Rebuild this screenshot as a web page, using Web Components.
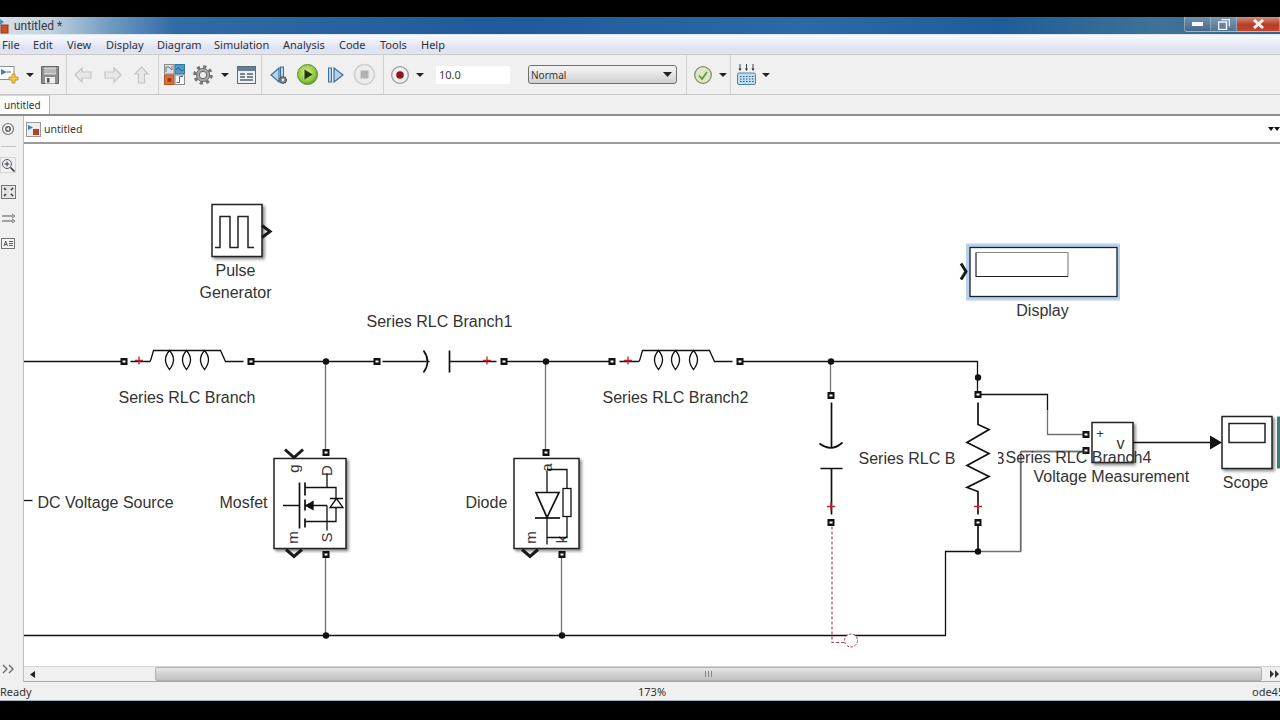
<!DOCTYPE html>
<html>
<head>
<meta charset="utf-8">
<title>untitled</title>
<style>
  html, body { margin: 0; height: 720px; overflow: hidden; background: #000; }
</style>
</head>
<body>
<sl-window>
  <sl-titlebar title-text="untitled *"></sl-titlebar>
  <sl-menubar>
    <sl-menu style="width:16px">File</sl-menu>
    <sl-menu style="width:19px">Edit</sl-menu>
    <sl-menu style="width:24px">View</sl-menu>
    <sl-menu style="width:36px">Display</sl-menu>
    <sl-menu style="width:42px">Diagram</sl-menu>
    <sl-menu style="width:54px">Simulation</sl-menu>
    <sl-menu style="width:41px">Analysis</sl-menu>
    <sl-menu style="width:26px">Code</sl-menu>
    <sl-menu style="width:26px">Tools</sl-menu>
    <sl-menu style="width:24px">Help</sl-menu>
  </sl-menubar>
  <sl-toolbar>
    <sl-toolgroup first style="width:67px;--gap:7px">
      <sl-icon name="new"></sl-icon><sl-icon name="caret"></sl-icon><sl-icon name="save"></sl-icon>
    </sl-toolgroup>
    <sl-toolgroup style="width:92px;--gap:12px;--pad:7px">
      <sl-icon name="back"></sl-icon><sl-icon name="forward"></sl-icon><sl-icon name="up"></sl-icon>
    </sl-toolgroup>
    <sl-toolgroup style="width:103px;--gap:8px;--pad:5px">
      <sl-icon name="library"></sl-icon><sl-icon name="gear"></sl-icon><sl-icon name="caret"></sl-icon><sl-icon name="table"></sl-icon>
    </sl-toolgroup>
    <sl-toolgroup style="width:122px;--gap:10px;--pad:8px">
      <sl-icon name="stepback"></sl-icon><sl-icon name="run" style="margin-left:-1px"></sl-icon><sl-icon name="stepforward"></sl-icon><sl-icon name="stop"></sl-icon>
    </sl-toolgroup>
    <sl-toolgroup style="width:303px;--gap:7px;--pad:7px">
      <sl-icon name="record"></sl-icon><sl-icon name="caret"></sl-icon>
      <sl-field style="margin-left:5px">10.0</sl-field>
      <sl-select style="margin-left:11px">Normal</sl-select>
    </sl-toolgroup>
    <sl-toolgroup style="width:44px;--gap:7px;--pad:7px">
      <sl-icon name="check"></sl-icon><sl-icon name="caret"></sl-icon>
    </sl-toolgroup>
    <sl-toolgroup last style="width:60px;--gap:6px;--pad:6px">
      <sl-icon name="grid"></sl-icon><sl-icon name="caret"></sl-icon>
    </sl-toolgroup>
  </sl-toolbar>
  <sl-tabs label="untitled"></sl-tabs>
  <sl-workspace>
    <sl-palette slot="palette"></sl-palette>
    <sl-breadcrumb slot="crumb" label="untitled"></sl-breadcrumb>
    <sl-diagram slot="canvas"></sl-diagram>
    <sl-hscroll slot="scroll"></sl-hscroll>
  </sl-workspace>
  <sl-status></sl-status>
</sl-window>

<script>
const ICONS = {
  caret: [8, 18, `<path d="M0 7h8l-4 4z" fill="#222"/>`],
  new: [19, 18, `<rect x="-3" y=".5" width="17" height="13" fill="#fff" stroke="#8a8f96"/>
    <path d="M1 3l6 3-6 3z" fill="#3f84b8"/><path d="M7 6h4" stroke="#555"/>
    <path d="M12 8h3v3h3v3h-3v3h-3v-3H9v-3h3z" fill="#f0c94e" stroke="#b88c24" stroke-width=".8"/>`],
  save: [18, 18, `<path d="M.5.5h17v17H.5z" fill="#8d8d8d" stroke="#666"/><rect x="3" y="1.500" width="12" height="7" fill="#d4d4d4"/>
    <path d="M3 4h12M3 6h12" stroke="#999"/><rect x="4" y="11" width="10" height="6.500" fill="#eee"/><rect x="6" y="12" width="2.500" height="4.500" fill="#555"/>`],
  back: [18, 18, `<path d="M1 9l7-7v4h9v6H8v4z" fill="#e8e8e8" stroke="#c6c6c6" stroke-width="1.200"/>`],
  forward: [18, 18, `<path d="M17 9l-7-7v4H1v6h9v4z" fill="#e8e8e8" stroke="#c6c6c6" stroke-width="1.200"/>`],
  up: [15, 18, `<path d="M7.500 1L14 8h-3.500v9h-6V8H1z" fill="#e8e8e8" stroke="#c6c6c6" stroke-width="1.200"/>`],
  library: [21, 21, `<rect x=".5" y=".5" width="9.500" height="9.500" fill="#d8dee4" stroke="#8c8c8c"/><path d="M2 8V3h3l3 3V2" fill="none" stroke="#777"/>
    <rect x="11" y=".5" width="9.500" height="9.500" fill="#4d9cc8" stroke="#2f78a0"/><path d="M12 6q2-4 3.500-1t4 1" fill="none" stroke="#1c5c80"/>
    <rect x=".5" y="11" width="9.500" height="9.500" fill="#d9733a" stroke="#b0562a"/><rect x="3.500" y="14" width="4" height="4" fill="#a8381c"/>
    <rect x="11" y="11" width="9.500" height="9.500" fill="#f6f6f6" stroke="#8c8c8c"/><path d="M12.500 18.500h3v-6h3.500" fill="none" stroke="#666"/>`],
  gear: [20, 20, `<circle cx="10" cy="10" r="8.300" fill="none" stroke="#777" stroke-width="3" stroke-dasharray="3.300 3.200"/>
    <circle cx="10" cy="10" r="6.600" fill="#a6a6a6" stroke="#6e6e6e"/><circle cx="10" cy="10" r="3.700" fill="#eee" stroke="#666"/>`],
  table: [19, 18, `<rect x=".5" y=".5" width="18" height="17" fill="#eef2f6" stroke="#5d6c7c"/><rect x="1" y="1" width="17" height="4" fill="#5f7f9c"/>
    <path d="M3 8h5M10 8h6M3 11h5M10 11h6M3 14h13" stroke="#55606a" stroke-width="1.300"/>`],
  stepback: [18, 20, `<path d="M9 3L1 10l8 7z" fill="#b6d3ea" stroke="#3c6f9c" stroke-width="1.200"/><rect x="10.500" y="2" width="3" height="13" fill="#b6d3ea" stroke="#3c6f9c"/>
    <circle cx="13" cy="15" r="3.300" fill="#8a8a8a" stroke="#444" stroke-width="1.300" stroke-dasharray="1.500 .6"/><circle cx="13" cy="15" r="1.200" fill="#eee"/>`],
  run: [21, 21, `<defs><radialGradient id="g" cx=".45" cy=".4" r=".65"><stop offset="0" stop-color="#d6ee8c"/><stop offset=".65" stop-color="#93c93f"/><stop offset="1" stop-color="#4f8d22"/></radialGradient></defs>
    <circle cx="10.500" cy="10.500" r="10" fill="url(#g)" stroke="#5a8f34"/><path d="M7.500 5.500l8 5-8 5z" fill="#22350f"/>`],
  stepforward: [16, 20, `<rect x=".5" y="3" width="3" height="14" fill="#b6d3ea" stroke="#3c6f9c"/><path d="M6 3l9 7-9 7z" fill="#b6d3ea" stroke="#3c6f9c" stroke-width="1.200"/>`],
  stop: [21, 21, `<circle cx="10.500" cy="10.500" r="10" fill="#ececec" stroke="#cfcfcf" stroke-width="1.500"/><rect x="6.500" y="6.500" width="8" height="8" fill="#b2b2b2"/>`],
  record: [18, 18, `<circle cx="9" cy="9" r="8.300" fill="#f2f0f0" stroke="#9a9a9a" stroke-width="1.300"/><circle cx="9" cy="9" r="3.800" fill="#8c1515"/>`],
  check: [18, 18, `<circle cx="9" cy="9" r="8.300" fill="#dce8c6" stroke="#7f8f6c" stroke-width="1.300"/><path d="M5 9.500l3 3.500 5-7" fill="none" stroke="#5f9a38" stroke-width="1.700"/>`],
  grid: [19, 21, `<path d="M3 0v6M9.500 0v6M16 0v6" stroke="#444"/><path d="M1.500 4.500L3 7l1.500-2.500M8 4.500L9.500 7 11 4.500M14.500 4.500L16 7l1.500-2.500" fill="#333"/>
    <rect x=".5" y="9" width="18" height="11.500" rx="1.500" fill="#bcdcf2" stroke="#5384a8"/>
    <path d="M3 12.500h14M3 15h14M3 17.500h14" stroke="#3a5f80" stroke-width="1.200" stroke-dasharray="1.500 1.500"/>`]
};

class SlIcon extends HTMLElement {
  constructor() {
    super();
    this.attachShadow({ mode: 'open' });
  }
  connectedCallback() {
    const [w, h, body] = ICONS[this.getAttribute('name')];
    this.shadowRoot.innerHTML = `
      <style>:host { display: block; flex: none; width: ${w}px; height: ${h}px; } svg { display: block; overflow: visible; }</style>
      <svg width="${w}" height="${h}" viewBox="0 0 ${w} ${h}">${body}</svg>`;
  }
}

class SlWindow extends HTMLElement {
  constructor() {
    super();
    this.attachShadow({ mode: 'open' });
    this.shadowRoot.innerHTML = `
      <style>
        :host { display: flex; flex-direction: column; width: 1280px; height: 684px; margin-top: 17px; overflow: hidden;
                background: #f0f0f0; font-family: "Noto Sans", "Open Sans", sans-serif; color: #2c2c2c; }
      </style>
      <slot></slot>`;
  }
}

class SlTitlebar extends HTMLElement {
  constructor() {
    super();
    this.attachShadow({ mode: 'open' });
  }
  connectedCallback() {
    this.shadowRoot.innerHTML = `
      <style>
        :host { display: flex; align-items: flex-start; height: 18px; flex: none; box-sizing: border-box;
                border-bottom: 1px solid #dfe8f0;
                background: linear-gradient(90deg, #d6dfe9 0, #c3d2e0 50px, #6f9bc2 110px, #2f6ba6 175px, #1f5a9a 500px, #2b6aa6 800px, #1e5d99 1000px, #3f7296 1160px, #31648e 1280px); }
        .ic { width: 10px; height: 17px; flex: none; }
        .t { font-family: Roboto, sans-serif; font-size: 12px; line-height: 18px; margin-left: 4px; color: #33393f; }
        .btns { margin-left: auto; display: flex; height: 15px; }
        .b { display: flex; align-items: center; justify-content: center; box-sizing: border-box; border: 1px solid #ffffff50; border-top: 0; }
        .mn { width: 27px; border-radius: 0 0 0 3px; background: linear-gradient(#7391ab, #48688a); }
        .mx { width: 26px; border-left: 0; background: linear-gradient(#7d9ab3, #54748f); }
        .cl { width: 43px; border-left: 0; background: linear-gradient(#d29078, #b93c2a 55%, #c2452e); }
      </style>
      <svg class="ic" viewBox="0 0 10 17"><path d="M0 2l4 3-4 3z" fill="#4c8ebd"/><rect x="1" y="8" width="7" height="8" fill="#c9502a" stroke="#8a3a20"/></svg>
      <span class="t">${this.getAttribute('title-text')}</span>
      <div class="btns">
        <div class="b mn"><svg width="11" height="4"><rect width="11" height="4" fill="#f4f6f8"/></svg></div>
        <div class="b mx"><svg width="12" height="11"><path d="M3.500.5h8v7M.5 3h8v7.500h-8z" fill="none" stroke="#eef2f6" stroke-width="1.500"/></svg></div>
        <div class="b cl"><svg width="13" height="10"><path d="M2 1l9 8M11 1l-9 8" stroke="#f6f0ee" stroke-width="3"/></svg></div>
      </div>`;
  }
}

class SlMenubar extends HTMLElement {
  constructor() {
    super();
    this.attachShadow({ mode: 'open' });
    this.shadowRoot.innerHTML = `
      <style>
        :host { display: flex; align-items: center; gap: 15px; height: 20px; flex: none; box-sizing: border-box; padding: 0 0 1px 2px;
                border-bottom: 1px solid #c9c9c9;
                background: linear-gradient(#f8f9fc, #f0f2f9 30%, #dde1f2 70%, #e2e5f3); }
      </style>
      <slot></slot>`;
  }
}

class SlMenu extends HTMLElement {
  constructor() {
    super();
    this.attachShadow({ mode: 'open' });
    this.shadowRoot.innerHTML = `
      <style>:host { display: block; flex: none; font-size: 11px; white-space: nowrap; color: #2f3338; }</style>
      <slot></slot>`;
  }
}

class SlToolbar extends HTMLElement {
  constructor() {
    super();
    this.attachShadow({ mode: 'open' });
    this.shadowRoot.innerHTML = `
      <style>
        :host { display: flex; height: 40px; flex: none; box-sizing: border-box; background: #f0f0f0; border-bottom: 1px solid #c6c6c6; }
      </style>
      <slot></slot>`;
  }
}

class SlToolgroup extends HTMLElement {
  constructor() {
    super();
    this.attachShadow({ mode: 'open' });
    this.shadowRoot.innerHTML = `
      <style>
        :host { display: flex; align-items: center; gap: var(--gap, 8px); flex: none; box-sizing: border-box; padding-left: var(--pad, 0);
                border-right: 1px solid #d2d2d2; }
        :host([first]) { padding-left: 0; }
        :host([last]) { border-right: 0; }
      </style>
      <slot></slot>`;
  }
}

class SlField extends HTMLElement {
  constructor() {
    super();
    this.attachShadow({ mode: 'open' });
    this.shadowRoot.innerHTML = `
      <style>
        :host { display: block; flex: none; box-sizing: border-box; width: 74px; height: 18px; padding-left: 3px; background: #fff;
                font-size: 11px; line-height: 18px; color: #3a3a3a; }
      </style>
      <slot></slot>`;
  }
}

class SlSelect extends HTMLElement {
  constructor() {
    super();
    this.attachShadow({ mode: 'open' });
    this.shadowRoot.innerHTML = `
      <style>
        :host { display: flex; align-items: center; flex: none; box-sizing: border-box; width: 149px; height: 19px; padding: 0 4px 0 2px;
                border: 1px solid #707070; border-radius: 3px; background: linear-gradient(#f4f4f4, #e4e4e4 50%, #cfcfcf);
                font-size: 10px; color: #333; }
        svg { margin-left: auto; }
      </style>
      <slot></slot>
      <svg width="9" height="5"><path d="M0 0h9L4.500 5z" fill="#222"/></svg>`;
  }
}

class SlTabs extends HTMLElement {
  constructor() {
    super();
    this.attachShadow({ mode: 'open' });
  }
  connectedCallback() {
    this.shadowRoot.innerHTML = `
      <style>
        :host { display: flex; height: 21px; flex: none; box-sizing: border-box; background: #f0f0f0; border-bottom: 2px solid #8e8e8e; }
        .tab { box-sizing: border-box; width: 50px; height: 19px; padding-left: 4px; background: #fff; border-right: 1px solid #b4b4b4; border-top: 1px solid #d8d8d8;
               font-size: 10px; line-height: 19px; color: #333; }
      </style>
      <div class="tab">${this.getAttribute('label')}</div>`;
  }
}

class SlWorkspace extends HTMLElement {
  constructor() {
    super();
    this.attachShadow({ mode: 'open' });
    this.shadowRoot.innerHTML = `
      <style>
        :host { display: grid; grid-template-columns: 24px 1256px; grid-template-rows: 28px 522px 16px; flex: none; }
        ::slotted([slot="palette"]) { grid-row: 1 / 4; }
      </style>
      <slot name="palette"></slot>
      <slot name="crumb"></slot>
      <slot name="canvas"></slot>
      <slot name="scroll"></slot>`;
  }
}

class SlPalette extends HTMLElement {
  constructor() {
    super();
    this.attachShadow({ mode: 'open' });
    this.shadowRoot.innerHTML = `
      <style>
        :host { display: flex; flex-direction: column; align-items: flex-start; box-sizing: border-box; background: #f0f0f0; border-right: 1px solid #bdbdbd; padding: 6px 0 0 1px; }
        svg { display: block; flex: none; }
        hr { width: 15px; margin: 10px 0 10px 0; border: 0; border-top: 1px solid #c4c4c4; }
        .z { margin: 0 0 12px -1px; }
        .f { margin-bottom: 14px; }
        .a { margin-bottom: 14px; }
        .m { margin: auto 0 8px 1px; }
      </style>
      <svg width="14" height="14"><circle cx="7" cy="7" r="5.500" fill="none" stroke="#777" stroke-width="1.200"/><circle cx="7" cy="7" r="3" fill="#666"/><path d="M5 7l3-2v4z" fill="#eee"/></svg>
      <hr>
      <svg class="z" width="16" height="16"><rect x=".5" y=".5" width="15" height="15" fill="none" stroke="#bbb" stroke-dasharray="1 1"/><circle cx="7" cy="7" r="4.500" fill="#f4f4f4" stroke="#556"/><path d="M4.500 7h5M7 4.500v5" stroke="#334"/><path d="M10.500 10.500l4 4" stroke="#333" stroke-width="1.600"/></svg>
      <svg class="f" width="15" height="14"><rect x=".5" y=".5" width="14" height="13" fill="#e4e4e4" stroke="#777"/><path d="M3 3l2 2M12 3l-2 2M3 11l2-2M12 11l-2-2" stroke="#333" stroke-width="1.500"/></svg>
      <svg class="a" width="15" height="11"><path d="M1 3h11M1 8h11" stroke="#555"/><path d="M11 1l3 2-3 2M11 6l3 2-3 2" fill="none" stroke="#777"/></svg>
      <svg width="14" height="11"><rect x=".5" y=".5" width="13" height="10" fill="#f4f4f4" stroke="#777"/><path d="M3 8l1.700-5L6.500 8M3.700 6.500h2M8 3.500h4M8 5.500h4M8 7.500h4" fill="none" stroke="#333" stroke-width=".8"/></svg>
      <svg class="m" width="13" height="10"><path d="M1 1l4 4-4 4M7 1l4 4-4 4" fill="none" stroke="#666" stroke-width="1.300"/></svg>`;
  }
}

class SlBreadcrumb extends HTMLElement {
  constructor() {
    super();
    this.attachShadow({ mode: 'open' });
  }
  connectedCallback() {
    this.shadowRoot.innerHTML = `
      <style>
        :host { display: flex; align-items: center; gap: 3px; box-sizing: border-box; padding-left: 2px; background: #fff; border-bottom: 2px solid #9a9a9a; }
        .t { font-size: 10.500px; color: #333; }
        .d { margin-left: auto; }
      </style>
      <svg width="15" height="15"><rect x=".5" y=".5" width="14" height="14" fill="#eee" stroke="#999"/><path d="M2 3l5 2.500L2 8z" fill="#3d7fae"/><rect x="7" y="7" width="6" height="6" fill="#b8402a"/></svg>
      <span class="t">${this.getAttribute('label')}</span>
      <svg class="d" width="12" height="6"><path d="M0 1h6L3 5zM6 1h6L9 5z" fill="#111"/></svg>`;
  }
}

// little drawing helpers for the model canvas
const port = (x, y) => `<rect x="${x - 3.5}" y="${y - 3.5}" width="7" height="7" fill="#111"/><rect x="${x - 1.5}" y="${y - 1}" width="3" height="2" fill="#fff"/>`;
const dot = (x, y) => `<circle cx="${x}" cy="${y}" r="3.200" fill="#111"/>`;
const plus = (x, y) => `<path d="M${x - 4} ${y}h8M${x} ${y - 4}v8" stroke="#c0202e" stroke-width="1.300"/>`;
const label = (x, y, t, anchor = 'start') => `<text class="l" x="${x - 0.5}" y="${y}" text-anchor="${anchor}">${t}</text>`;
const small = (x, y, t) => `<text class="pin" transform="translate(${x} ${y}) rotate(-90)" text-anchor="middle">${t}</text>`;
const chevron = (x1, y1, x2, y2, x3, y3) => `<path class="chev" d="M${x1} ${y1}L${x2} ${y2}L${x3} ${y3}"/>`;
const coil = (x) => `<path d="M${x} 350q-8 9 0 19q8-10 0-19z"/>`;

function inductor(x) {
  // x is where the lead starts; the drawing of the coil is the same for both branches
  return `<path d="M${x} 361h19q1 0 2-4l2-7h67l5 11h18"/>` + coil(x + 39) + coil(x + 56) + coil(x + 74);
}

class SlDiagram extends HTMLElement {
  constructor() {
    super();
    this.attachShadow({ mode: 'open' });
    this.shadowRoot.innerHTML = `
      <style>
        :host { display: block; background: #fff; overflow: hidden; }
        svg { display: block; }
        g.w { fill: none; stroke: #111; stroke-width: 1.300; }
        .gray { fill: none; stroke: #707070; stroke-width: 1.300; }
        .box { fill: #fff; stroke: #222; stroke-width: 1.500; filter: drop-shadow(2px 2px 1.500px #0007); }
        .chev { fill: none; stroke: #1a1a1a; stroke-width: 3; }
        text { font-family: "Liberation Sans", Arial, sans-serif; font-size: 16px; fill: #333; stroke: none; }
        text.pin { font-size: 15px; fill: #333; }
        text.tiny { font-size: 13px; }
      </style>
      <svg width="1256" height="522" viewBox="24 143.500 1256 522">
        <g class="w" transform="translate(-.5 0)">
          <!-- wires -->
          <path d="M24 361H124M251 361H377M504 361H611M740 361H978V394"/>
          <path class="gray" d="M326 361V452M326 554V635M562 554V635"/>
          <path d="M24 635H946V551H978"/>
          <path d="M24 500H33"/>
          <path class="gray" d="M546 361V452"/>
          <path class="gray" d="M831 361V395"/>
          <path class="gray" d="M1021 451V551H978M1021 451H1086"/>
          <path d="M978 394H1048V410"/><path class="gray" d="M1048 410V434H1086"/>
          <path d="M1133 442H1212"/>
          <!-- inductors -->
          ${inductor(131)}
          ${inductor(620)}
          <!-- capacitors -->
          <path d="M383 361H430M424 350q8 11 0 22M450 350V372M450 361H497" stroke-width="1.700"/>
          <path d="M832 402V448M820 443q12 9 23-1M821 468H843M832 468V514" stroke-width="1.700"/>
        </g>
        <!-- the resistor block sits on top of this name -->
        ${label(859, 463, 'Series RLC Branch3')}
        <rect x="956" y="440" width="42" height="30" fill="#fff"/>
        <g class="w">
          <path d="M978 402V424L989 429L967 442L989 453L967 465L989 476L967 487L978 491V514M978 522V551" stroke-width="1.700"/>
          <path class="gray" d="M1021 451H1086M1021 451V551"/>
        </g>
        <path d="M832 526V642H851" fill="none" stroke="#b8474f" stroke-width="1.200" stroke-dasharray="3 2"/>
        <circle cx="851" cy="640" r="6.500" fill="#fff" stroke="#c0404a" stroke-width="1" stroke-dasharray="2.500 1.500"/>

        <!-- pulse generator -->
        <rect class="box" x="212" y="204" width="50" height="52"/>
        <path d="M215 247H220V216H230V247H238V216H248V247H254" fill="none" stroke="#222" stroke-width="1.500"/>
        ${chevron(262, 225, 270, 231, 262, 237)}
        ${label(236, 275.500, 'Pulse', 'middle')}
        ${label(236, 297.500, 'Generator', 'middle')}

        <!-- display -->
        <rect x="966" y="243" width="154" height="57" fill="#b9d0ea"/>
        <rect x="970" y="247" width="147" height="49" fill="#fff" stroke="#16202c" stroke-width="1.300"/>
        <path d="M976 252H1068V276" fill="none" stroke="#8a8a8a" stroke-width="1.200"/>
        <path d="M976 252V276H1068" fill="none" stroke="#222" stroke-width="1.200"/>
        ${chevron(961, 263, 966, 271, 961, 279)}
        ${label(1043, 315.500, 'Display', 'middle')}

        <!-- mosfet -->
        <rect class="box" x="274" y="458" width="72" height="90"/>
        ${chevron(285, 449, 294, 457, 303, 449)}
        ${chevron(286, 549, 294, 556, 302, 549)}
        ${small(299, 468, 'g')}${small(332, 470, 'D')}${small(298, 537, 'm')}${small(332, 537, 'S')}
        <g class="w">
          <path d="M283 505H300M299.500 482V528M305 482V495M305 499V510M305 518V527" stroke-width="1.700"/>
          <path d="M305 487H327M305 505H327M305 521H327M327 473V487M327 505V530M327 487H336V521H327"/>
          <path d="M306 505l7-4v8z" fill="#111"/>
          <path d="M336.500 498l-6.500 9h13zM330 498H343" fill="#fff"/>
        </g>
        ${label(220, 507.500, 'Mosfet')}

        <!-- diode -->
        <rect class="box" x="514" y="458" width="65" height="90"/>
        ${chevron(522, 549, 530, 556, 538, 549)}
        ${small(552, 467, 'a')}${small(536, 537, 'm')}${small(567, 539, 'k')}
        <g class="w">
          <path d="M547 470V544M547 469H567V488M567 516V537H547"/>
          <rect x="563" y="488" width="8" height="28" fill="#fff"/>
          <path d="M536 492H559L547 517z" fill="#fff" stroke-width="1.700"/>
          <path d="M535 517.500H560" stroke-width="1.700"/>
        </g>
        ${label(466, 507.500, 'Diode')}

        <!-- voltage measurement -->
        <rect class="box" x="1092" y="422" width="41" height="40"/>
        <text class="tiny" x="1100" y="437" text-anchor="middle">+</text>
        ${label(1121, 448, 'v', 'middle')}

        <!-- scope -->
        <path d="M1210 435L1222 442L1210 449z" fill="#111"/>
        <rect class="box" x="1222" y="416" width="50" height="52"/>
        <rect x="1229" y="423" width="36" height="19" fill="#fff" stroke="#222" stroke-width="1.500"/>
        <rect x="1277" y="416" width="3" height="52" fill="#3e7c78"/>
        ${label(1246, 487.500, 'Scope', 'middle')}

        ${port(124, 361)}${port(251, 361)}${port(377, 361)}${port(504, 361)}${port(612, 361)}${port(740, 361)}
        ${port(326, 452)}${port(326, 554)}${port(546, 452)}${port(562, 554)}
        ${port(831, 395)}${port(831, 522)}${port(978, 394)}${port(978, 522)}${port(1086, 434)}${port(1086, 450)}
        ${dot(326, 361)}${dot(546, 361)}${dot(831, 361)}${dot(978, 377)}${dot(978, 551)}${dot(326, 635)}${dot(562, 635)}
        ${plus(139, 360)}${plus(487, 360)}${plus(628, 360)}${plus(831, 506)}${plus(978, 506)}

        ${label(119, 402.500, 'Series RLC Branch')}
        ${label(367, 326, 'Series RLC Branch1')}
        ${label(603, 402.500, 'Series RLC Branch2')}
        ${label(38, 507.500, 'DC Voltage Source')}
        ${label(1006, 462.500, 'Series RLC Branch4')}
        ${label(1034, 481, 'Voltage Measurement')}
      </svg>`;
  }
}

class SlHscroll extends HTMLElement {
  constructor() {
    super();
    this.attachShadow({ mode: 'open' });
    this.shadowRoot.innerHTML = `
      <style>
        :host { display: flex; align-items: center; box-sizing: border-box; background: #f0f0f0; border-top: 1px solid #d4d4d4; border-bottom: 1px solid #a8a8a8; }
        .l { margin-left: 6px; }
        .thumb { display: flex; align-items: center; justify-content: center; box-sizing: border-box; width: 1107px; height: 14px; margin-left: 120px;
                 border: 1px solid #b0b0b0; border-radius: 2px; background: linear-gradient(#e6e6e6, #d0d0d0 50%, #c2c2c2); }
        .r { margin-left: 8px; }
      </style>
      <svg class="l" width="5" height="7"><path d="M5 0v7L0 3.500z" fill="#222"/></svg>
      <div class="thumb"><svg width="7" height="6"><path d="M.5 0v6M3.500 0v6M6.500 0v6" stroke="#888"/></svg></div>
      <svg class="r" width="10" height="8"><path d="M0 0l4 4-4 4zM5 0l4 4-4 4z" fill="#333"/></svg>`;
  }
}

class SlStatus extends HTMLElement {
  constructor() {
    super();
    this.attachShadow({ mode: 'open' });
    this.shadowRoot.innerHTML = `
      <style>
        :host { display: grid; grid-template-columns: 638px 614px 28px; align-items: center; height: 19px; flex: none; box-sizing: border-box;
                background: #f0f0f0; font-size: 11px; color: #333; border-bottom: 1px solid #9db4c4; overflow: hidden; }
        .e { white-space: nowrap; overflow: hidden; }
      </style>
      <span>Ready</span><span>173%</span><span class="e">ode45</span>`;
  }
}

customElements.define('sl-icon', SlIcon);
customElements.define('sl-window', SlWindow);
customElements.define('sl-titlebar', SlTitlebar);
customElements.define('sl-menubar', SlMenubar);
customElements.define('sl-menu', SlMenu);
customElements.define('sl-toolbar', SlToolbar);
customElements.define('sl-toolgroup', SlToolgroup);
customElements.define('sl-field', SlField);
customElements.define('sl-select', SlSelect);
customElements.define('sl-tabs', SlTabs);
customElements.define('sl-workspace', SlWorkspace);
customElements.define('sl-palette', SlPalette);
customElements.define('sl-breadcrumb', SlBreadcrumb);
customElements.define('sl-diagram', SlDiagram);
customElements.define('sl-hscroll', SlHscroll);
customElements.define('sl-status', SlStatus);
</script>
</body>
</html>
